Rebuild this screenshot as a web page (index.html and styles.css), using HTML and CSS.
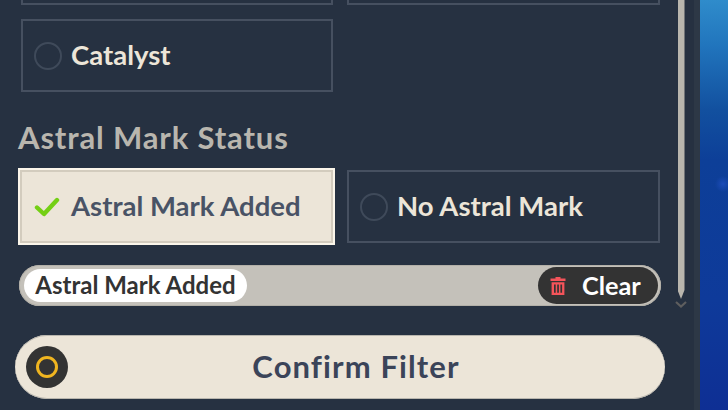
FILE: index.html
```html
<!DOCTYPE html>
<html lang="en">
<head>
<meta charset="utf-8">
<title>Filter</title>
<link rel="stylesheet" href="styles.css">
</head>
<body>
<div class="app">
  <section class="panel">
    <div class="content">
      <div class="options">
        <div class="option"></div>
        <div class="option"></div>
        <div class="option"><span class="radio"></span><span class="label">Catalyst</span></div>
      </div>
      <h2 class="heading">Astral Mark Status</h2>
      <div class="options status">
        <div class="option selected">
          <svg class="check" viewBox="0 0 26 22" aria-hidden="true"><path d="M3 11.5 L10 18 L23 4" fill="none" stroke="#74cf14" stroke-width="4.4" stroke-linecap="round" stroke-linejoin="round"/></svg>
          <span class="label">Astral Mark Added</span>
        </div>
        <div class="option"><span class="radio"></span><span class="label">No Astral Mark</span></div>
      </div>
      <div class="filterbar">
        <span class="tag">Astral Mark Added</span>
        <span class="clear">
          <svg class="trash" viewBox="0 0 16 18" aria-hidden="true"><path fill="#f4545a" d="M5.5 0h5v1.6h5V4H.5V1.6h5zM1.6 5.2h12.8V18H1.6zM4 7.4v8.4h1.7V7.4zm3.2 0v8.4h1.7V7.4zm3.2 0v8.4h1.7V7.4z" fill-rule="evenodd"/></svg>
          <span class="clear-text">Clear</span>
        </span>
      </div>
      <div class="confirm">
        <span class="confirm-icon"><span class="ring"></span></span>
        <span class="confirm-text">Confirm Filter</span>
      </div>
    </div>
    <div class="scroll">
      <div class="thumb"></div>
      <svg class="chevron" viewBox="0 0 12 7" aria-hidden="true"><path d="M1 1 L6 5.5 L11 1" fill="none" stroke="#5e5e5e" stroke-width="2.2"/></svg>
    </div>
  </section>
  <div class="backdrop"></div>
</div>
</body>
</html>
```
FILE: styles.css
```css
* { box-sizing: border-box; }
html, body { margin: 0; height: 100%; }
body { overflow: hidden; font-family: "Lato", "Liberation Sans", sans-serif; font-weight: 700; }
.app { display: flex; width: 728px; height: 410px; overflow: hidden; }
.panel {
  width: 700px; height: 410px; flex: none; display: flex; justify-content: space-between;
  background: #263141; border-right: 6px solid #2d3846; overflow: hidden;
}
.content {
  width: 666px; height: 410px; flex: none; display: flex; flex-direction: column; justify-content: flex-end;
  padding: 0 0 11px 15px;
}
.content > * { flex: none; }
.options { display: grid; grid-template-columns: 312px 313px; column-gap: 14px; row-gap: 14px; margin-left: 6px; }
.option {
  height: 73px; display: flex; align-items: center; gap: 9px; padding-left: 11px;
  border: 2px solid #465060;
}
.radio { width: 28px; height: 28px; flex: none; border-radius: 50%; border: 2px solid #3f4a5a; }
.label { font-size: 27.5px; padding-bottom: 2px; color: #ece5d8; white-space: nowrap; }
.heading { margin: 29px 0 14px 3px; font-size: 31px; line-height: 33px; letter-spacing: 0.85px; font-weight: 700; color: #b9b6ae; }
.status { align-items: center; }
.selected {
  width: 317px; height: 77px; margin-left: -3px; padding-left: 14px; gap: 11px;
  background: #ece5d8; border: 2px solid #fbf6ea; box-shadow: inset 0 0 0 2px #d3ccbe;
}
.selected .label { color: #495366; }
.check { width: 26px; height: 22px; flex: none; }
.filterbar {
  height: 41px; margin: 20px 0 0 4px; width: 642px; display: flex; align-items: center; justify-content: space-between;
  background: #c4c1ba; border-radius: 21px; padding: 0 3px 0 5px;
  box-shadow: inset 0 0 0 1px #b3b0a8;
}
.tag {
  width: 223px; height: 33px; display: flex; align-items: center; justify-content: center; padding-bottom: 2px;
  background: #fff; border-radius: 17px; font-size: 24px; color: #333; white-space: nowrap;
}
.clear {
  width: 120px; height: 37px; display: flex; align-items: center; gap: 16px; padding-left: 12px;
  background: #333; border-radius: 19px; font-size: 25.3px; color: #fff;
}
.clear-text { padding-bottom: 2px; }
.trash { width: 16px; height: 18px; flex: none; }
.confirm {
  position: relative; height: 64px; width: 650px; margin-top: 29px; display: flex; align-items: center; justify-content: center;
  padding: 0 0 2px 32px;
  background: #ece5d8; border-radius: 32px; box-shadow: inset 0 1px 0 #b9b6ae, inset 0 -1px 0 #b9b6ae;
}
.confirm-icon {
  position: absolute; left: 11px; top: 11px; width: 42px; height: 42px; border-radius: 50%;
  background: #333; display: flex; align-items: center; justify-content: center;
}
.ring { width: 22px; height: 22px; border-radius: 50%; border: 3px solid #f0b520; }
.confirm-text { font-size: 31px; letter-spacing: 1.1px; color: #3b4459; }
.scroll { width: 8px; margin-right: 9px; display: flex; flex-direction: column; align-items: center; flex: none; }
.thumb {
  width: 7px; height: 299px; flex: none; background: #b9b6ae;
  clip-path: polygon(0 0, 100% 0, 100% 97%, 50% 100%, 0 97%);
}
.chevron { width: 12px; height: 7px; flex: none; margin-top: 2px; overflow: visible; }
.backdrop {
  flex: 1;
  background: radial-gradient(circle at 23px 184px, #1c4cb8 0, rgba(28,76,184,0) 8px),
    linear-gradient(180deg, #2f8ccb 0, #2175bd 45px, #12509f 110px, #0d3f98 160px, #0e3a9a 300px, #0e2f94 410px);
}
```
